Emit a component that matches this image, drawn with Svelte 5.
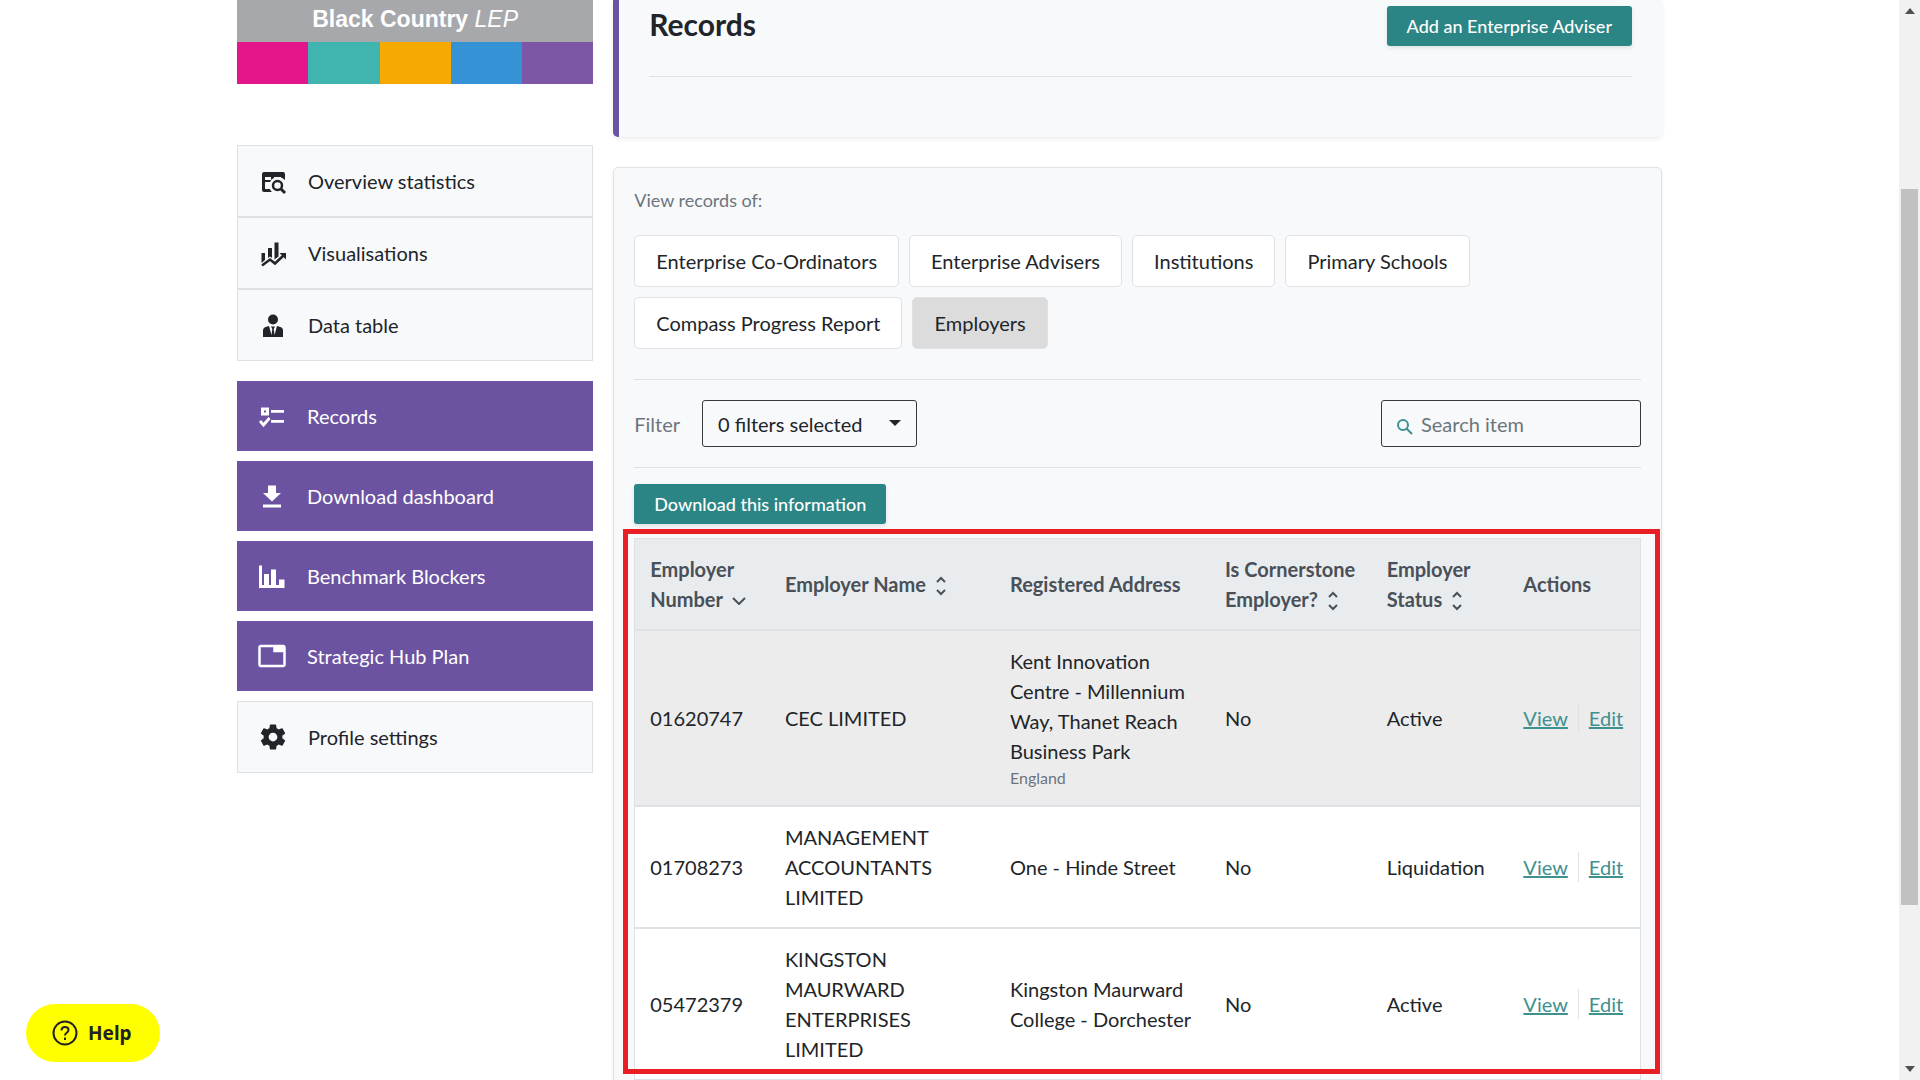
<script>
  let selectedTab = $state('Employers');
  let search = $state('');

  const tabs = [
    'Enterprise Co-Ordinators',
    'Enterprise Advisers',
    'Institutions',
    'Primary Schools',
    'Compass Progress Report',
    'Employers'
  ];

  const brandColours = ['#e4168b', '#40b5b0', '#f6a900', '#3592d4', '#7d57a6'];

  const employers = [
    {
      number: '01620747',
      name: 'CEC LIMITED',
      address: 'Kent Innovation Centre - Millennium Way, Thanet Reach Business Park',
      country: 'England',
      cornerstone: 'No',
      status: 'Active',
      active: true
    },
    {
      number: '01708273',
      name: 'MANAGEMENT ACCOUNTANTS LIMITED',
      address: 'One - Hinde Street',
      cornerstone: 'No',
      status: 'Liquidation'
    },
    {
      number: '05472379',
      name: 'KINGSTON MAURWARD ENTERPRISES LIMITED',
      address: 'Kingston Maurward College - Dorchester',
      cornerstone: 'No',
      status: 'Active'
    }
  ];

  let rows = $derived(employers.filter((e) => e.name.toLowerCase().includes(search.toLowerCase())));
</script>

{#snippet sortIcon()}
  <svg class="sort" viewBox="0 0 10 20" width="10" height="20" aria-hidden="true">
    <path d="M1 6l4-4 4 4M1 14l4 4 4-4" />
  </svg>
{/snippet}

<div class="viewport">
  <div class="container">
    <aside>
      <div class="logo">
        <div class="logo-text"><b>Black Country</b> <i>LEP</i></div>
        <div class="logo-bars">
          {#each brandColours as colour}
            <span style:background={colour}></span>
          {/each}
        </div>
      </div>

      <nav>
        <div class="group">
          <a class="item plain" href="#overview">
            <svg class="icon" viewBox="0 0 30 30">
              <path d="M4 8q0-2 2-2h19q2 0 2 2v6q-2-2-4-2.500V11h-7v1q-3 1-4 4H7v7h5q.5 2 2 3H6q-2 0-2-2zM7 11v3h6v-3z" fill-rule="evenodd" />
              <circle cx="19.500" cy="19.500" r="4.500" fill="none" stroke="currentColor" stroke-width="2.500" />
              <path d="M22.500 22.500l4.500 4.500" stroke="currentColor" stroke-width="3" />
            </svg>
            Overview statistics
          </a>
          <a class="item plain" href="#visualisations">
            <svg class="icon" viewBox="0 0 30 30">
              <path d="M3.500 15H7v7l-3.500 3zM10 10h4v10l-2-1.500-2 1.500zM16.500 4.500h4v14l-4 3z" />
              <path d="M4 27.500l8-6 5 4 8.500-8" fill="none" stroke="currentColor" stroke-width="2.500" />
              <path d="M21.500 15H28v6.500z" />
            </svg>
            Visualisations
          </a>
          <a class="item plain" href="#data">
            <svg class="icon" viewBox="0 0 30 30">
              <circle cx="15" cy="9.500" r="5" />
              <path d="M5 27v-7q0-3 6-4l2.500 9 .8-6-1.300-2.500h4l-1.300 2.500.8 6 2.500-9q6 1 6 4v7z" />
            </svg>
            Data table
          </a>
        </div>

        <a class="item" href="#records">
          <svg class="icon" viewBox="0 0 30 30">
            <path d="M4 6.500h8v8H4zm3 3v2h2v-2zM14 9h13v2.800H14zM14 19h13v2.800H14z" fill-rule="evenodd" />
            <path d="M3 20l3.500 4 6-7" fill="none" stroke="currentColor" stroke-width="2.800" />
          </svg>
          Records
        </a>
        <a class="item" href="#download">
          <svg class="icon" viewBox="0 0 30 30">
            <path d="M11 4.500h8V12h5l-9 8.500L6 12h5zM6 23.500h18v3H6z" />
          </svg>
          Download dashboard
        </a>
        <a class="item" href="#benchmark">
          <svg class="icon" viewBox="0 0 30 30">
            <path d="M2 4.500h3V24h2V13h5v11h2V8.500h5V24h3v-5.500h5.500V27H2z" />
          </svg>
          Benchmark Blockers
        </a>
        <a class="item" href="#hub">
          <svg class="icon" viewBox="0 0 24 24">
            <path d="M21 3H3c-1.100 0-2 .9-2 2v14c0 1.100.9 2 2 2h18c1.100 0 2-.9 2-2V5c0-1.100-.9-2-2-2zm0 16H3V5h10v4h8v10z" />
          </svg>
          Strategic Hub Plan
        </a>
        <a class="item plain" href="#profile">
          <svg class="icon" viewBox="0 0 24 24">
            <path d="M19.430 12.980c.04-.32.07-.64.07-.98s-.03-.66-.07-.98l2.110-1.650c.19-.15.24-.42.12-.64l-2-3.460c-.12-.22-.39-.3-.61-.22l-2.490 1c-.52-.4-1.080-.73-1.690-.98l-.38-2.650C14.460 2.180 14.250 2 14 2h-4c-.25 0-.46.18-.49.42l-.38 2.650c-.61.25-1.170.59-1.690.98l-2.490-1c-.23-.09-.49 0-.61.22l-2 3.460c-.13.22-.07.49.12.64l2.110 1.650c-.04.32-.07.65-.07.98s.03.66.07.98l-2.110 1.650c-.19.15-.24.42-.12.64l2 3.460c.12.22.39.3.61.22l2.490-1c.52.4 1.080.73 1.690.98l.38 2.650c.03.24.24.42.49.42h4c.25 0 .46-.18.49-.42l.38-2.650c.61-.25 1.170-.59 1.690-.98l2.490 1c.23.09.49 0 .61-.22l2-3.460c.12-.22.07-.49-.12-.64l-2.110-1.650zM12 15.500c-1.930 0-3.500-1.570-3.500-3.500s1.570-3.500 3.500-3.500 3.500 1.570 3.500 3.500-1.570 3.500-3.500 3.500z" />
          </svg>
          Profile settings
        </a>
      </nav>
    </aside>

    <main>
      <header>
        <div class="title-row">
          <h1>Records</h1>
          <button class="primary">Add an Enterprise Adviser</button>
        </div>
      </header>

      <section class="card">
        <p class="hint">View records of:</p>
        <div class="tabs">
          {#each tabs as tab}
            <button class="tab" class:selected={selectedTab === tab} onclick={() => (selectedTab = tab)}>{tab}</button>
          {/each}
        </div>

        <div class="filters">
          <label for="filter">Filter</label>
          <div class="select">
            <select id="filter">
              <option>0 filters selected</option>
            </select>
            <svg viewBox="0 0 12 6" width="12" height="6" aria-hidden="true"><path d="M0 0h12L6 6z" /></svg>
          </div>
          <div class="search">
            <svg viewBox="0 0 16 16" width="16" height="16" aria-hidden="true">
              <circle cx="6" cy="6" r="5" />
              <path d="M9.500 9.500l5.500 5.500" />
            </svg>
            <input type="text" placeholder="Search item" aria-label="Search item" bind:value={search} />
          </div>
        </div>

        <button class="primary">Download this information</button>

        <div class="highlight">
          <table>
            <colgroup>
              <col class="c-number" />
              <col class="c-name" />
              <col class="c-address" />
              <col class="c-cornerstone" />
              <col class="c-status" />
              <col />
            </colgroup>
            <thead>
              <tr>
                <th>
                  Employer Number
                  <svg class="sorted" viewBox="0 0 14 8" width="14" height="8" aria-hidden="true"><path d="M1 1l6 6 6-6" /></svg>
                </th>
                <th>Employer Name {@render sortIcon()}</th>
                <th>Registered Address</th>
                <th>Is Cornerstone Employer? {@render sortIcon()}</th>
                <th>Employer Status {@render sortIcon()}</th>
                <th>Actions</th>
              </tr>
            </thead>
            <tbody>
              {#each rows as row}
                <tr class:active={row.active}>
                  <td>{row.number}</td>
                  <td>{row.name}</td>
                  <td>
                    {row.address}
                    {#if row.country}<small>{row.country}</small>{/if}
                  </td>
                  <td>{row.cornerstone}</td>
                  <td>{row.status}</td>
                  <td>
                    <div class="actions">
                      <a href="#view">View</a>
                      <a href="#edit">Edit</a>
                    </div>
                  </td>
                </tr>
              {/each}
            </tbody>
          </table>
        </div>
      </section>
    </main>
  </div>

  <button class="help">
    <svg viewBox="0 0 26 26" width="26" height="26" aria-hidden="true">
      <circle cx="13" cy="13" r="11.500" />
      <path d="M9.500 10.500q0-3.500 3.500-3.500t3.500 3q0 1.500-1.800 2.800T13 15.500" />
      <path d="M13 17.500v2.500" />
    </svg>
    Help
  </button>

  <div class="scrollbar" aria-hidden="true">
    <svg viewBox="0 0 10 6" width="10" height="6"><path d="M0 6l5-6 5 6z" /></svg>
    <div class="track"><div class="thumb"></div></div>
    <svg viewBox="0 0 10 6" width="10" height="6"><path d="M0 0l5 6 5-6z" /></svg>
  </div>
</div>

<style>
  :global(body) {
    margin: 0;
    background: #fff;
  }

  .viewport {
    position: relative;
    height: 100vh;
    overflow: hidden;
    box-sizing: border-box;
    padding-right: 21px;
    font-family: Lato, "Liberation Sans", sans-serif;
    font-size: 20px;
    line-height: 30px;
    color: #212529;
  }

  button,
  select,
  input {
    font: inherit;
    color: inherit;
  }

  button {
    cursor: pointer;
  }

  .container {
    display: flex;
    gap: 20px;
    max-width: 1425px;
    margin: 0 auto;
  }

  aside {
    flex: 0 0 25%;
    min-width: 0;
  }

  main {
    flex: 1;
    min-width: 0;
  }

  .logo {
    margin-bottom: 61px;
  }

  .logo-text {
    padding: 4px 0 8px;
    background: #a7a8ac;
    color: #fff;
    font-family: "Liberation Sans", Arial, sans-serif;
    font-size: 23px;
    text-align: center;
  }

  .logo-bars {
    display: flex;
    height: 42px;
  }

  .logo-bars span {
    flex: 1;
  }

  nav {
    display: flex;
    flex-direction: column;
    gap: 10px;
  }

  .group {
    margin-bottom: 10px;
  }

  .item {
    display: flex;
    align-items: center;
    gap: 20px;
    padding: 20px;
    background: #6b53a1;
    color: #fff;
    text-decoration: none;
  }

  .item.plain {
    border: 1px solid #dee2e6;
    background: #f8f9fb;
    color: #212529;
  }

  .icon {
    width: 30px;
    height: 30px;
    fill: currentColor;
  }

  header {
    padding: 6px 30px 60px;
    border-left: 6px solid #6b53a1;
    border-radius: 0 0 5px 5px;
    background: #f8f9fb;
    box-shadow: 0 2px 4px rgba(0, 0, 0, 0.08);
  }

  .title-row {
    display: flex;
    align-items: flex-start;
    justify-content: space-between;
    padding-bottom: 30px;
    border-bottom: 1px solid #dee2e6;
  }

  h1 {
    margin: 0;
    font-size: 30px;
    font-weight: 700;
    line-height: 36px;
  }

  .primary {
    padding: 5px 20px;
    border: 0;
    border-radius: 3px;
    background: #2c8585;
    box-shadow: 0 2px 4px rgba(0, 0, 0, 0.1);
    color: #fff;
    font-size: 18px;
    font-weight: 500;
  }

  .card {
    margin-top: 30px;
    padding: 17px 20px 120px;
    border: 1px solid #dee2e6;
    border-radius: 5px;
    background: #f8f9fb;
    box-shadow: 0 2px 4px rgba(0, 0, 0, 0.06);
  }

  .hint {
    margin: 0 0 20px;
    color: #6c757d;
    font-size: 18px;
  }

  .tabs {
    display: flex;
    flex-wrap: wrap;
    gap: 10px;
    padding-bottom: 30px;
  }

  .tab {
    padding: 10px 21px;
    border: 1px solid #dee2e6;
    border-radius: 5px;
    background: #fff;
  }

  .tab.selected {
    background: #dcdcdc;
  }

  .filters {
    display: flex;
    align-items: center;
    margin-bottom: 16px;
    padding: 20px 0;
    border: solid #dee2e6;
    border-width: 1px 0;
  }

  .filters label {
    margin-right: 22px;
    color: #6c757d;
  }

  .select {
    position: relative;
  }

  .select svg {
    position: absolute;
    top: 20px;
    right: 16px;
    fill: #212529;
    pointer-events: none;
  }

  select {
    appearance: none;
    width: 215px;
    height: 47px;
    padding: 0 15px;
    border: 1px solid #343a40;
    border-radius: 3px;
    background: transparent;
  }

  .search {
    display: flex;
    align-items: center;
    gap: 8px;
    box-sizing: border-box;
    width: 260px;
    height: 47px;
    margin-left: auto;
    padding: 0 15px;
    border: 1px solid #343a40;
    border-radius: 3px;
  }

  .search svg {
    flex: none;
    margin-top: 6px;
    fill: none;
    stroke: #3a9190;
    stroke-width: 2;
  }

  .search input {
    min-width: 0;
    width: 100%;
    padding: 0;
    border: 0;
    outline: 0;
    background: transparent;
  }

  .search input::placeholder {
    color: #6c757d;
    opacity: 1;
  }

  /* red frame drawn round the table */
  .highlight {
    position: relative;
    margin-top: 14px;
  }

  .highlight::after {
    content: "";
    position: absolute;
    inset: -9px -19px 6px -11px;
    border: 5px solid #ea1f26;
    pointer-events: none;
  }

  table {
    width: 100%;
    table-layout: fixed;
    border-collapse: separate;
    border-spacing: 0;
    border: solid #dee2e6;
    border-width: 0 1px;
  }

  .c-number { width: 13.4%; }
  .c-name { width: 22.4%; }
  .c-address { width: 21.4%; }
  .c-cornerstone { width: 16.1%; }
  .c-status { width: 13.6%; }

  th,
  td {
    padding: 15px 8px 15px 15px;
    border: solid #dee2e6;
    border-width: 1px 0;
    text-align: left;
    vertical-align: middle;
  }

  th {
    padding-right: 4px;
    background: #e9ecef;
    color: #495057;
    font-weight: 700;
  }

  td {
    background: #fff;
  }

  .active td {
    background: #ececec;
  }

  small {
    display: block;
    color: #6c757d;
    font-size: 16px;
    line-height: 24px;
  }

  .sort,
  .sorted {
    margin-left: 5px;
    fill: none;
    stroke: #495057;
    stroke-width: 2;
  }

  .sort {
    vertical-align: -4px;
  }

  .sorted {
    vertical-align: 2px;
  }

  .actions {
    display: flex;
  }

  .actions a {
    color: #3f9190;
  }

  .actions a + a {
    margin-left: 10px;
    padding-left: 10px;
    border-left: 1px solid #dee2e6;
  }

  .help {
    position: absolute;
    left: 26px;
    bottom: 18px;
    display: flex;
    align-items: center;
    gap: 10px;
    padding: 14px 28px 14px 26px;
    border: 0;
    border-radius: 29px;
    background: #ff0;
    color: #222;
    font-family: "Noto Sans", sans-serif;
    font-size: 19px;
    font-weight: 700;
  }

  .help svg {
    fill: none;
    stroke: #222;
    stroke-width: 2;
  }

  .scrollbar {
    position: absolute;
    top: 0;
    right: 0;
    bottom: 0;
    display: flex;
    flex-direction: column;
    align-items: center;
    gap: 7px;
    box-sizing: border-box;
    width: 21px;
    padding: 8px 0;
    background: #f1f1f1;
  }

  .scrollbar svg {
    fill: #505050;
  }

  .track {
    flex: 1;
    align-self: stretch;
    padding: 0 2px;
  }

  .thumb {
    height: 69%;
    margin-top: 168px;
    background: #c1c1c1;
  }
</style>
